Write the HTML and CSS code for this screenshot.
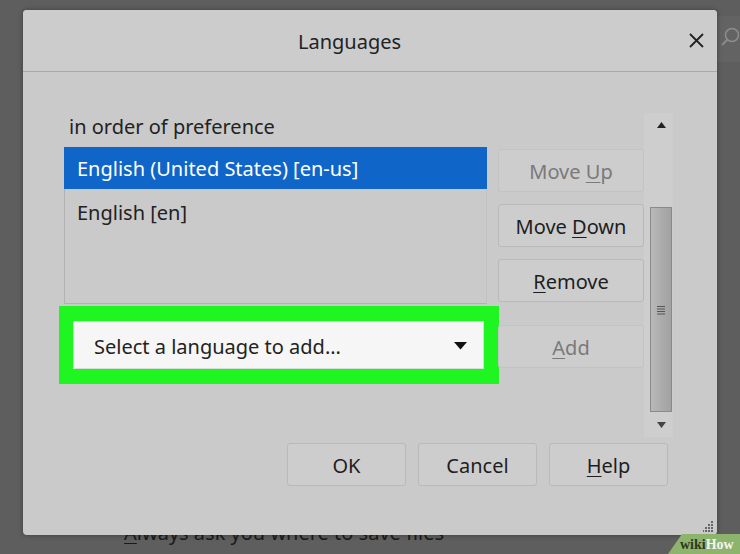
FILE: index.html
```html
<!DOCTYPE html>
<html>
<head>
<meta charset="utf-8">
<link rel="stylesheet" href="styles.css">
</head>
<body>
<div class="desk">
  <div class="searchbox">
    <svg width="23" height="46" viewBox="0 0 23 46"><circle cx="15" cy="19" r="6.5" fill="none" stroke="#8c8c8c" stroke-width="1.6"/><line x1="10.5" y1="23.5" x2="5" y2="29" stroke="#8c8c8c" stroke-width="1.8"/></svg>
  </div>
  <div class="dialog">
    <div class="titlebar">
      <span class="title">Languages</span>
      <span class="close"><svg width="15" height="15" viewBox="0 0 15 15"><path d="M1 1 L14 14 M14 1 L1 14" stroke="#222" stroke-width="1.8" fill="none"/></svg></span>
    </div>
    <div class="content">
      <div class="main">
        <div class="leftcol">
          <div class="label">in order of preference</div>
          <div class="list">
            <div class="item sel">English (United States) [en-us]</div>
            <div class="item">English [en]</div>
          </div>
          <div class="highlight">
            <div class="select">
              <span>Select a language to add...</span>
              <svg width="13" height="8" viewBox="0 0 13 8"><path d="M0 0 H13 L6.5 7.5 Z" fill="#111"/></svg>
            </div>
          </div>
        </div>
        <div class="rightcol">
          <div class="btn disabled"><span>Move <u>U</u>p</span></div>
          <div class="btn"><span>Move <u>D</u>own</span></div>
          <div class="btn"><span><u>R</u>emove</span></div>
          <div class="btn disabled add"><span><u>A</u>dd</span></div>
        </div>
        <div class="scrollbar">
          <div class="sb-up"><svg width="9" height="6" viewBox="0 0 9 6"><path d="M0 6 L4.5 0 L9 6 Z" fill="#222"/></svg></div>
          <div class="sb-thumb">
            <svg width="10" height="10" viewBox="0 0 10 10"><path d="M1 1.5 H9 M1 4 H9 M1 6.5 H9 M1 9 H9" stroke="#555" stroke-width="1.2"/></svg>
          </div>
          <div class="sb-down"><svg width="9" height="6" viewBox="0 0 9 6"><path d="M0 0 L9 0 L4.5 6 Z" fill="#444"/></svg></div>
        </div>
      </div>
      <div class="footer">
        <div class="btn fbtn"><span>OK</span></div>
        <div class="btn fbtn"><span>Cancel</span></div>
        <div class="btn fbtn"><span><u>H</u>elp</span></div>
      </div>
    </div>
    <svg class="grip" width="11" height="11" viewBox="0 0 11 11"><g fill="#666"><rect x="8" y="0" width="2" height="2"/><rect x="5" y="3" width="2" height="2"/><rect x="8" y="3" width="2" height="2"/><rect x="2" y="6" width="2" height="2"/><rect x="5" y="6" width="2" height="2"/><rect x="8" y="6" width="2" height="2"/><rect x="-1" y="9" width="2" height="2"/><rect x="2" y="9" width="2" height="2"/><rect x="5" y="9" width="2" height="2"/><rect x="8" y="9" width="2" height="2"/></g></svg>
  </div>
  <div class="behind"><u>A</u>lways ask you where to save files</div>
  <div class="wikihow"><span class="wiki">wiki</span><span class="how">How</span></div>
</div>
</body>
</html>
```
FILE: styles.css
```css
html, body {
  margin: 0;
  padding: 0;
}
body {
  width: 740px;
  height: 554px;
  overflow: hidden;
  background: #5e5e5e;
  font-family: "Noto Sans", "Open Sans", sans-serif;
  color: #222;
}
.desk {
  position: relative;
  width: 740px;
  height: 554px;
  padding-top: 10px;
  box-sizing: border-box;
}
.searchbox {
  position: absolute;
  left: 717px;
  top: 16px;
  width: 23px;
  height: 46px;
  background: #636363;
}
.dialog {
  position: relative;
  z-index: 1;
  margin-left: 23px;
  width: 694px;
  height: 525px;
  background: #cacaca;
  border-radius: 4px;
  box-shadow: 0 0 5px rgba(0,0,0,0.35);
}
.titlebar {
  height: 61px;
  border-bottom: 1px solid #a8a8a8;
  display: flex;
  align-items: center;
  padding-right: 13px;
  background: #cccccc;
  border-radius: 4px 4px 0 0;
}
.title {
  flex: 1;
  text-align: center;
  padding-right: 13px;
  font-size: 20px;
  padding-top: 2px;
}
.close {
  display: flex;
  width: 15px;
  height: 15px;
}
.content {
  padding: 41px 0 0 41px;
}
.main {
  display: flex;
  height: 324px;
}
.leftcol {
  width: 423px;
  display: flex;
  flex-direction: column;
}
.label {
  height: 34px;
  line-height: 28px;
  padding-left: 5px;
  font-size: 20px;
  box-sizing: border-box;
}
.list {
  height: 157px;
  border: 1px solid #b2b2b2;
  border-right-color: #c2c2c2;
  box-sizing: border-box;
}
.item {
  height: 44px;
  line-height: 48px;
  padding-left: 12px;
  font-size: 20px;
}
.item.sel {
  height: 42px;
  line-height: 44px;
  background: #0f66c8;
  color: #fff;
  margin: -1px -1px 0 -1px;
  padding-left: 13px;
}
.highlight {
  margin-top: 2px;
  margin-left: -5px;
  width: 440px;
  height: 78px;
  background: #1ff521;
  padding: 15px 15px 15px 14px;
  box-sizing: border-box;
}
.select {
  height: 48px;
  background: #f6f6f6;
  border: 1px solid #dcdcdc;
  box-sizing: border-box;
  display: flex;
  align-items: center;
  justify-content: space-between;
  padding: 2px 16px 0 20px;
  font-size: 20px;
}
.rightcol {
  margin-left: 11px;
  width: 146px;
  display: flex;
  flex-direction: column;
  padding-top: 36px;
  gap: 12px;
}
.btn {
  height: 43px;
  box-sizing: border-box;
  border: 1px solid #b9b9b9;
  border-radius: 3px;
  background: #cdcdcd;
  display: flex;
  align-items: center;
  justify-content: center;
  font-size: 20px;
  color: #1e1e1e;
  padding-top: 1px;
}
.btn.disabled {
  border-color: #c3c3c3;
  color: #7a7a7a;
}
.btn.add {
  margin-top: 11px;
}
u {
  text-decoration-thickness: 1px;
  text-underline-offset: 3px;
}
.scrollbar {
  width: 29px;
  background: #cecece;
  display: flex;
  flex-direction: column;
}
.sb-up {
  height: 94px;
  display: flex;
  justify-content: center;
  padding-top: 9px;
  box-sizing: border-box;
  padding-left: 5px;
}
.sb-thumb {
  height: 205px;
  margin-left: 6px;
  width: 22px;
  box-sizing: border-box;
  border: 1px solid #8a8a8a;
  background: linear-gradient(to right, #b9b9b9, #aaaaaa 60%, #a2a2a2);
  display: flex;
  align-items: center;
  justify-content: center;
}
.sb-down {
  flex: 1;
  display: flex;
  justify-content: center;
  align-items: center;
  padding-left: 5px;
}
.footer {
  margin-top: 6px;
  display: flex;
  justify-content: flex-end;
  gap: 12px;
  padding-right: 49px;
}
.fbtn {
  width: 119px;
}
.grip {
  position: absolute;
  right: 3px;
  bottom: 3px;
}
.behind {
  position: relative;
  z-index: 0;
  margin-top: -14px;
  padding-left: 124px;
  font-size: 20px;
  line-height: 24px;
  color: #1a1a1a;
}
.wikihow {
  position: absolute;
  right: 0;
  bottom: 0;
  width: 72px;
  height: 20px;
  background: #8db46c;
  clip-path: polygon(14px 0, 100% 0, 100% 100%, 0 100%);
  font-family: "Liberation Serif", "DejaVu Serif", serif;
  font-weight: bold;
  font-size: 14px;
  line-height: 21px;
  padding-left: 12px;
  box-sizing: border-box;
  z-index: 2;
}
.wiki { color: #2d3a22; }
.how { color: #f3f3f3; }
```
